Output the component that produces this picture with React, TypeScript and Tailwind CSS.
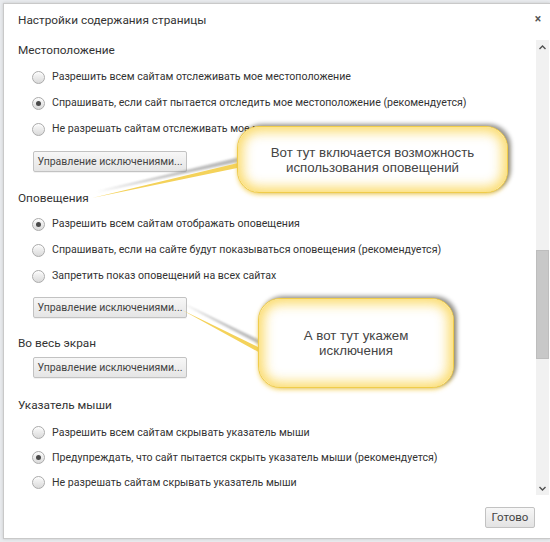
import React from "react";

type RadioProps = { label: string; checked?: boolean; h?: string };

function Radio({ label, checked, h = "h-[26px]" }: RadioProps) {
  return (
    <div className={`flex items-center ml-[14px] ${h}`}>
      <div className="w-[13px] h-[13px] rounded-full border border-[#ababab] bg-linear-to-b from-[#fbfbfb] to-[#dadada] flex items-center justify-center shadow-[inset_0_1px_1px_rgba(255,255,255,0.8)]">
        {checked && <div className="w-[5px] h-[5px] rounded-full bg-[#4a4a4a]" />}
      </div>
      <span className="ml-[7px] text-[10.6px] text-[#333] whitespace-nowrap">{label}</span>
    </div>
  );
}

function Heading({ children, mt = "" }: { children: React.ReactNode; mt?: string }) {
  return <div className={`h-[20px] leading-[20px] text-[11.8px] text-[#333] ${mt}`}>{children}</div>;
}

function ExcButton({ mt }: { mt: string }) {
  return (
    <div
      className={`ml-[15px] w-[154px] h-[21px] rounded-[2px] border border-[#c2c2c2] bg-linear-to-b from-[#f7f7f7] to-[#e5e5e5] flex items-center justify-center text-[10.5px] text-[#444] whitespace-nowrap shadow-[0_1px_0_rgba(0,0,0,0.05)] ${mt}`}
    >
      Управление исключениями...
    </div>
  );
}

export default function App() {
  return (
    <div className="relative w-[550px] h-[542px] overflow-hidden bg-[#e9ebee] pt-[3px] pl-[3px] pb-[3px] font-['Roboto',sans-serif]">
      <div className="h-full bg-white border-l border-t border-b border-[#c9c9c9] flex flex-col shadow-[0_0_3px_rgba(0,0,0,0.15)]">
        {/* header */}
        <div className="h-[36px] flex items-start justify-between pl-[14px] pt-[8px] pr-[9px]">
          <div className="text-[11.8px] leading-[16px] text-[#333]">Настройки содержания страницы</div>
          <div className="text-[12px] leading-[12px] text-[#555] font-bold mt-[1px]">×</div>
        </div>
        {/* body */}
        <div className="flex h-[455px]">
          <div className="flex-1 overflow-hidden pl-[14px]">
            <Heading>Местоположение</Heading>
            <div className="mt-[4px]">
              <Radio label="Разрешить всем сайтам отслеживать мое местоположение" />
              <Radio label="Спрашивать, если сайт пытается отследить мое местоположение (рекомендуется)" checked />
              <Radio label="Не разрешать сайтам отслеживать мое местоположение" />
            </div>
            <ExcButton mt="mt-[9px]" />

            <Heading mt="mt-[16px]">Оповещения</Heading>
            <div className="mt-[3px]">
              <Radio label="Разрешить всем сайтам отображать оповещения" checked />
              <Radio label="Спрашивать, если на сайте будут показываться оповещения (рекомендуется)" />
              <Radio label="Запретить показ оповещений на всех сайтах" />
            </div>
            <ExcButton mt="mt-[8px]" />

            <Heading mt="mt-[15px]">Во весь экран</Heading>
            <ExcButton mt="mt-[4px]" />

            <Heading mt="mt-[17px]">Указатель мыши</Heading>
            <div className="mt-[5px]">
              <Radio h="h-[25px]" label="Разрешить всем сайтам скрывать указатель мыши" />
              <Radio h="h-[25px]" label="Предупреждать, что сайт пытается скрыть указатель мыши (рекомендуется)" checked />
              <Radio h="h-[25px]" label="Не разрешать сайтам скрывать указатель мыши" />
            </div>
          </div>
          {/* scrollbar */}
          <div className="w-[13px] mr-[1px] bg-[#f1f1f1] flex flex-col">
            <div className="h-[14px] flex items-center justify-center">
              <svg width="7" height="5" viewBox="0 0 7 5">
                <path d="M0.5 4 L3.5 1 L6.5 4" fill="none" stroke="#505050" strokeWidth="1.4" />
              </svg>
            </div>
            <div className="h-[196px]" />
            <div className="h-[109px] bg-[#c8c8c8] border border-[#bdbdbd]" />
            <div className="flex-1" />
            <div className="h-[14px] flex items-center justify-center">
              <svg width="7" height="5" viewBox="0 0 7 5">
                <path d="M0.5 1 L3.5 4 L6.5 1" fill="none" stroke="#505050" strokeWidth="1.4" />
              </svg>
            </div>
          </div>
        </div>
        {/* footer */}
        <div className="flex-1 flex justify-end items-start pt-[12px] pr-[15px]">
          <div className="w-[50px] h-[21px] rounded-[2px] border border-[#c2c2c2] bg-linear-to-b from-[#f7f7f7] to-[#e3e3e3] flex items-center justify-center text-[11.5px] text-[#444]">
            Готово
          </div>
        </div>
      </div>

      {/* callout tails */}
      <svg className="absolute left-0 top-0" width="550" height="542" viewBox="0 0 550 542">
        <defs>
          <filter id="blur" x="-20%" y="-20%" width="140%" height="140%">
            <feGaussianBlur stdDeviation="1" />
          </filter>
        </defs>
        <polygon points="94,195 242,159 242,164" fill="#8a8a8a" opacity="0.6" filter="url(#blur)" transform="translate(2,-3)" />
        <polygon points="92,198 242,162 242,167" fill="#f4d25a" />
        <polygon points="182,308 262,346 262,351" fill="#8a8a8a" opacity="0.6" filter="url(#blur)" transform="translate(2,-4)" />
        <polygon points="182,310 262,349 262,354" fill="#f4d25a" />
      </svg>

      {/* bubble 1 */}
      <div className="absolute left-[237px] top-[126px] w-[271px] h-[67px] rounded-[22px] border border-[#f0cc4a] bg-white shadow-[3px_-2px_4px_rgba(0,0,0,0.4),0_2px_4px_rgba(245,205,70,0.7),inset_0_0_12px_5px_rgba(250,214,86,0.85)] flex flex-col items-center justify-center font-['Liberation_Sans',Arial,sans-serif] text-[13.3px] leading-[15px] text-[#444]">
        <div>Вот тут включается возможность</div>
        <div>использования оповещений</div>
      </div>

      {/* bubble 2 */}
      <div className="absolute left-[258px] top-[298px] w-[196px] h-[90px] rounded-[22px] border border-[#f0cc4a] bg-white shadow-[3px_-2px_4px_rgba(0,0,0,0.4),0_2px_4px_rgba(245,205,70,0.7),inset_0_0_12px_5px_rgba(250,214,86,0.85)] flex flex-col items-center justify-center font-['Liberation_Sans',Arial,sans-serif] text-[13.3px] leading-[15px] text-[#444]">
        <div>А вот тут укажем</div>
        <div>исключения</div>
      </div>
    </div>
  );
}
